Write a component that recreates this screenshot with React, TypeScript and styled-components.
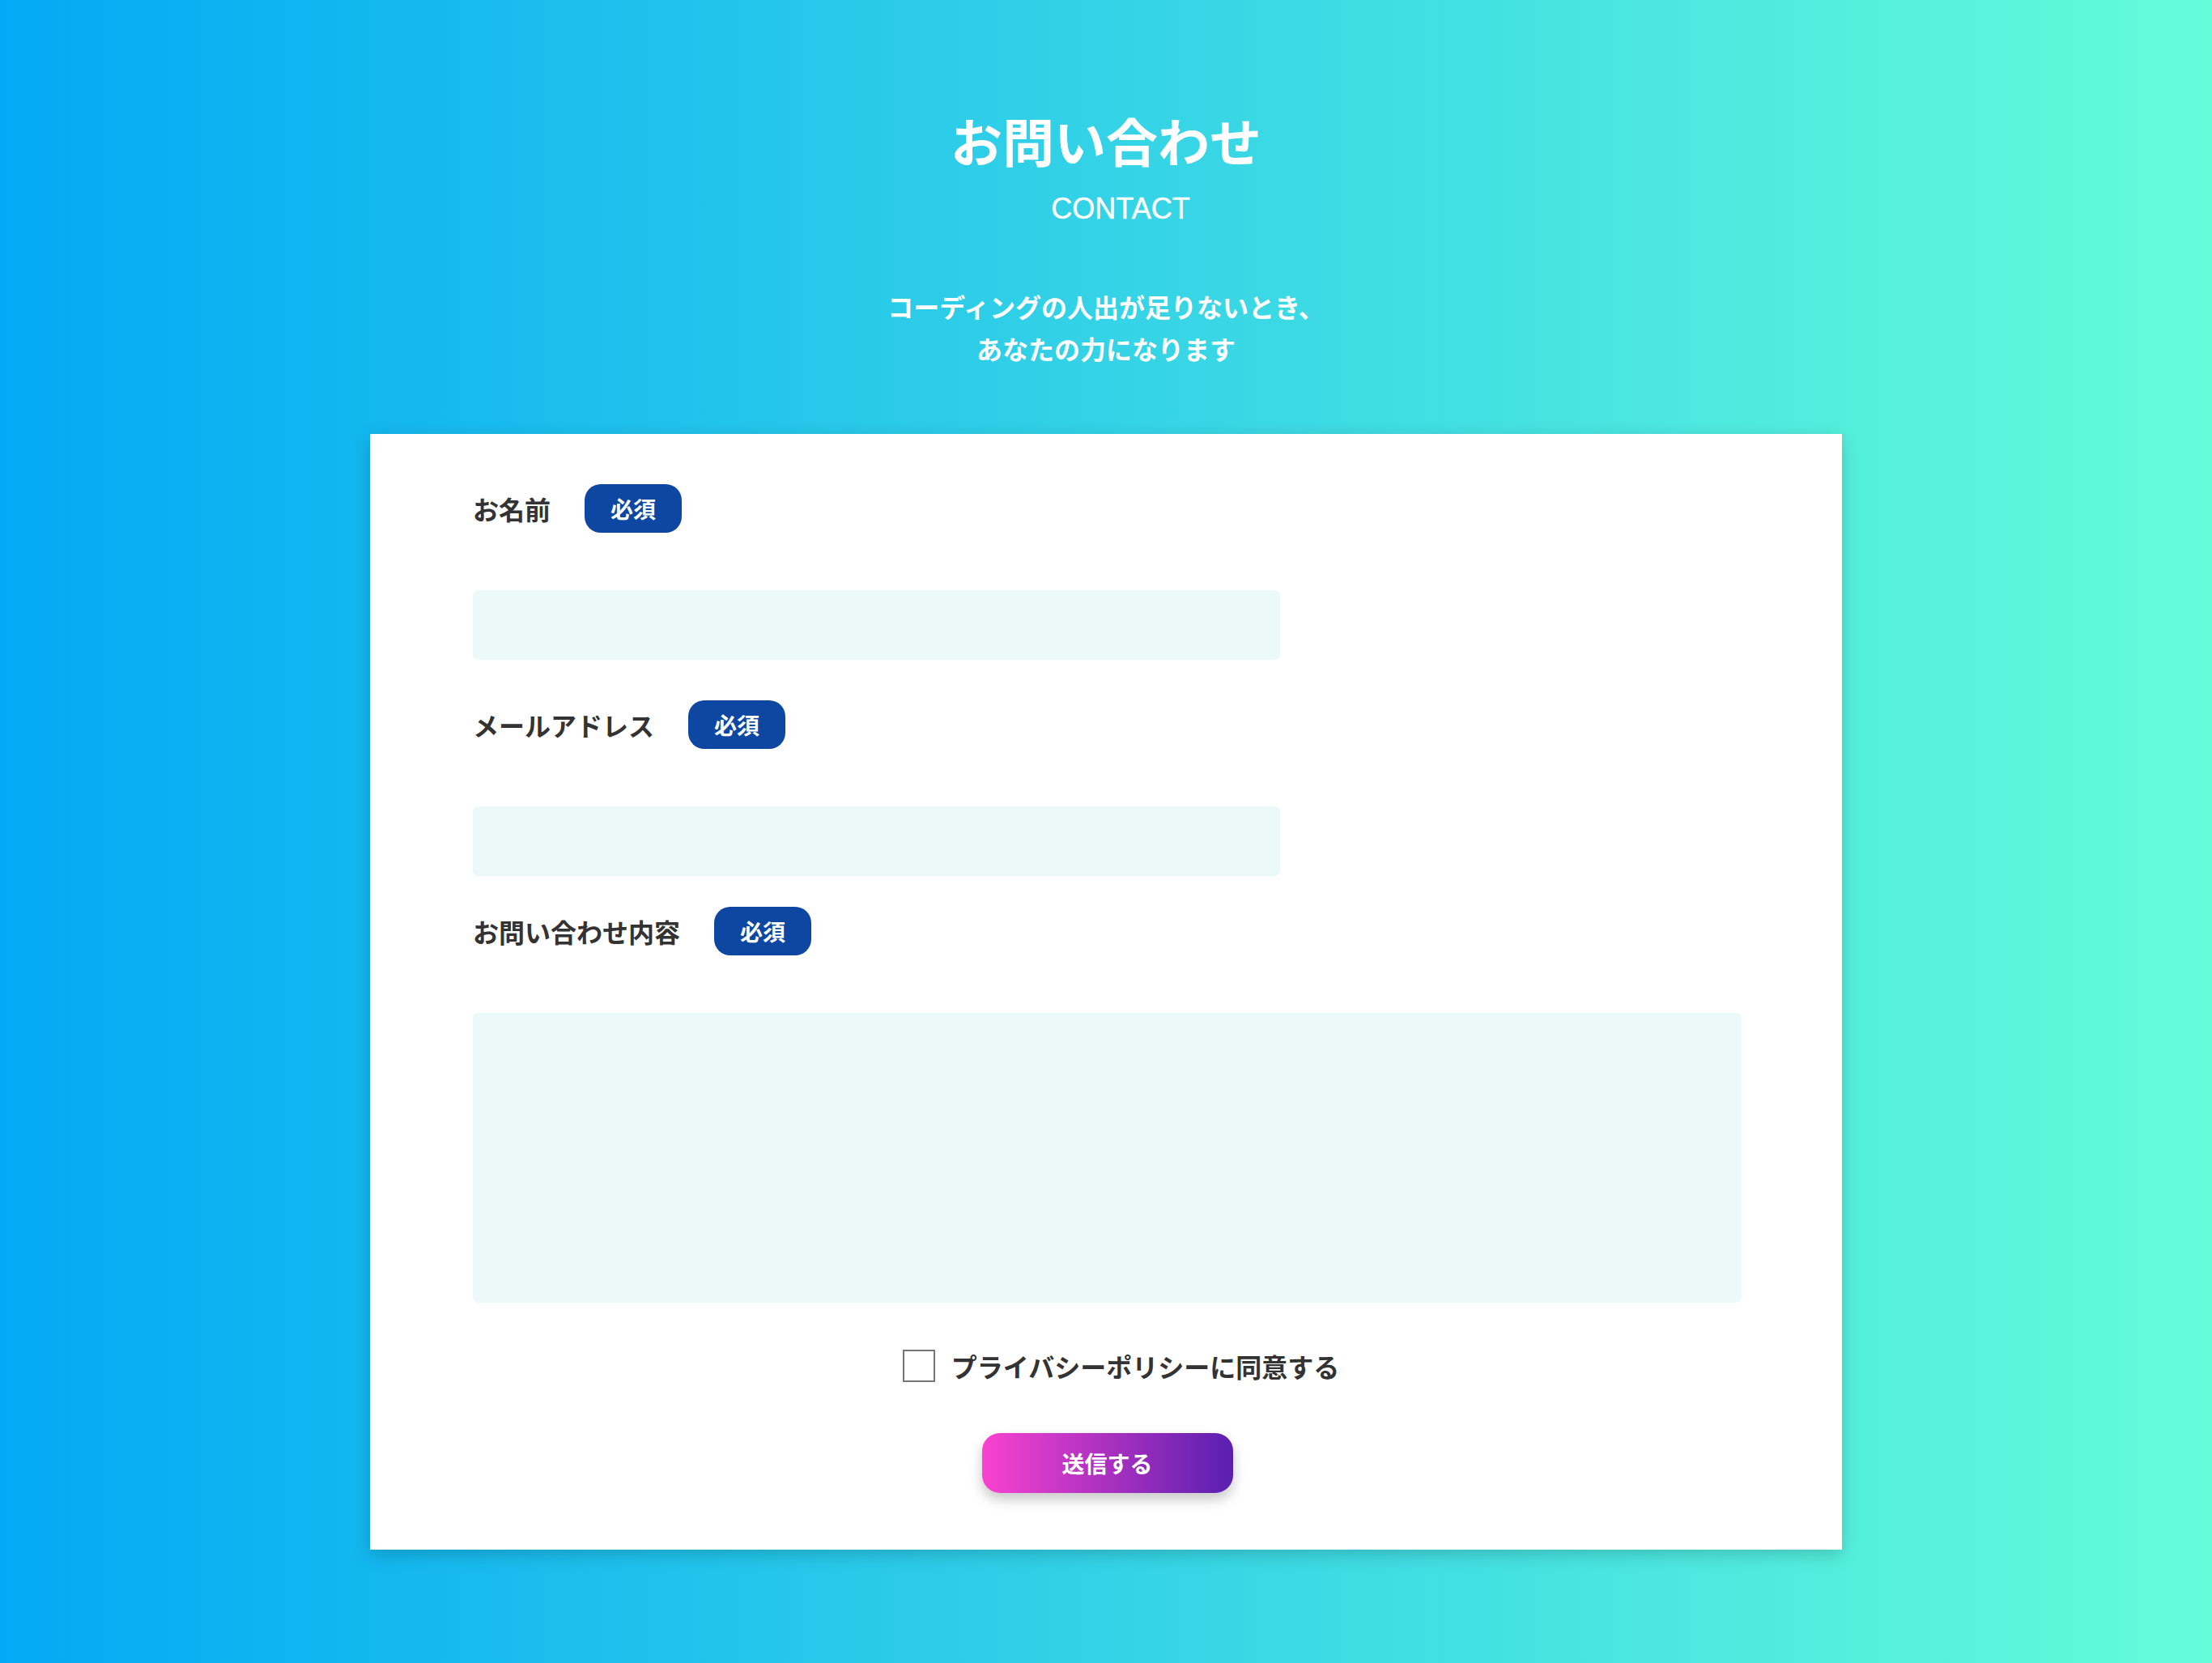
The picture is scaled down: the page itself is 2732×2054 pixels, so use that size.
import React from "react";
import styled, { createGlobalStyle } from "styled-components";

const GlobalStyle = createGlobalStyle`
  html, body {
    margin: 0;
    padding: 0;
  }
  body {
    min-height: 100vh;
    background: linear-gradient(to right, #03a9f4 0%, #64fcd9 100%);
    font-family: "Noto Sans CJK JP", "Noto Sans", sans-serif;
    color: #333333;
  }
  * { box-sizing: border-box; }
`;

const Page = styled.main`
  display: flex;
  flex-direction: column;
  align-items: center;
  padding: 140px 0 140px;
`;

const Title = styled.h1`
  margin: 0;
  font-size: 64px;
  line-height: 64px;
  font-weight: 700;
  color: #ffffff;
  letter-spacing: 0;
`;

const SubTitle = styled.p`
  margin: 36px 0 0 36px;
  font-family: "Liberation Sans", Arial, sans-serif;
  font-size: 36px;
  line-height: 36px;
  font-weight: 400;
  color: #ffffff;
  -webkit-text-stroke: 0.4px #ffffff;
`;

const Lead = styled.p`
  margin: 76px 0 0;
  font-size: 32px;
  line-height: 52px;
  font-weight: 700;
  color: #ffffff;
  text-align: center;
`;

const Card = styled.form`
  margin-top: 80px;
  width: 1818px;
  background: #ffffff;
  box-shadow: 0 6px 20px rgba(0, 0, 0, 0.18);
  padding: 62px 124px 70px 127px;
  display: flex;
  flex-direction: column;
`;

const Field = styled.div<{ $spaceAfter: number }>`
  display: flex;
  flex-direction: column;
  margin-bottom: ${(p) => p.$spaceAfter}px;
`;

const LabelRow = styled.div`
  display: flex;
  align-items: center;
  gap: 42px;
  height: 60px;
  margin-bottom: 71px;
`;

const Label = styled.label`
  font-size: 32px;
  line-height: 1;
  font-weight: 700;
  color: #333333;
`;

const Badge = styled.span`
  display: inline-flex;
  align-items: center;
  justify-content: center;
  height: 60px;
  padding: 0 32px;
  border-radius: 20px;
  background: #0d47a1;
  color: #ffffff;
  font-size: 28px;
  font-weight: 700;
  line-height: 1;
`;

const TextInput = styled.input`
  display: block;
  width: 997px;
  height: 86px;
  border: none;
  border-radius: 7px;
  background: #ebf9f9;
  padding: 0 20px;
  font-size: 30px;
  font-family: inherit;
  outline: none;
`;

const TextArea = styled.textarea`
  display: block;
  width: 100%;
  height: 358px;
  border: none;
  border-radius: 7px;
  background: #ebf9f9;
  padding: 20px;
  font-size: 30px;
  font-family: inherit;
  resize: none;
  outline: none;
`;

const AgreeRow = styled.label`
  display: flex;
  align-items: center;
  justify-content: center;
  gap: 20px;
  padding-left: 34px;
  margin-top: 58px;
  font-size: 32px;
  font-weight: 700;
  color: #333333;
  line-height: 40px;
`;

const CheckBox = styled.input`
  appearance: none;
  -webkit-appearance: none;
  width: 40px;
  height: 40px;
  margin: 0;
  border: 2px solid #757575;
  background: #ffffff;
  border-radius: 0;
`;

const SubmitWrap = styled.div`
  display: flex;
  justify-content: center;
  margin-top: 63px;
`;

const SubmitButton = styled.button`
  width: 310px;
  height: 74px;
  border: none;
  border-radius: 22px;
  background: linear-gradient(to right, #fa42d0 0%, #5a1fb0 100%);
  box-shadow: 0 8px 16px rgba(0, 0, 0, 0.22);
  color: #ffffff;
  font-family: inherit;
  font-size: 28px;
  font-weight: 700;
  cursor: pointer;
`;

export default function App() {
  return (
    <>
      <GlobalStyle />
      <Page>
        <Title>お問い合わせ</Title>
        <SubTitle>CONTACT</SubTitle>
        <Lead>
          コーディングの人出が足りないとき、
          <br />
          あなたの力になります
        </Lead>
        <Card onSubmit={(e) => e.preventDefault()}>
          <Field $spaceAfter={50}>
            <LabelRow>
              <Label htmlFor="name">お名前</Label>
              <Badge>必須</Badge>
            </LabelRow>
            <TextInput id="name" type="text" />
          </Field>
          <Field $spaceAfter={38}>
            <LabelRow>
              <Label htmlFor="email">メールアドレス</Label>
              <Badge>必須</Badge>
            </LabelRow>
            <TextInput id="email" type="email" />
          </Field>
          <Field $spaceAfter={0}>
            <LabelRow>
              <Label htmlFor="message">お問い合わせ内容</Label>
              <Badge>必須</Badge>
            </LabelRow>
            <TextArea id="message" />
          </Field>
          <AgreeRow>
            <CheckBox type="checkbox" />
            プライバシーポリシーに同意する
          </AgreeRow>
          <SubmitWrap>
            <SubmitButton type="submit">送信する</SubmitButton>
          </SubmitWrap>
        </Card>
      </Page>
    </>
  );
}
